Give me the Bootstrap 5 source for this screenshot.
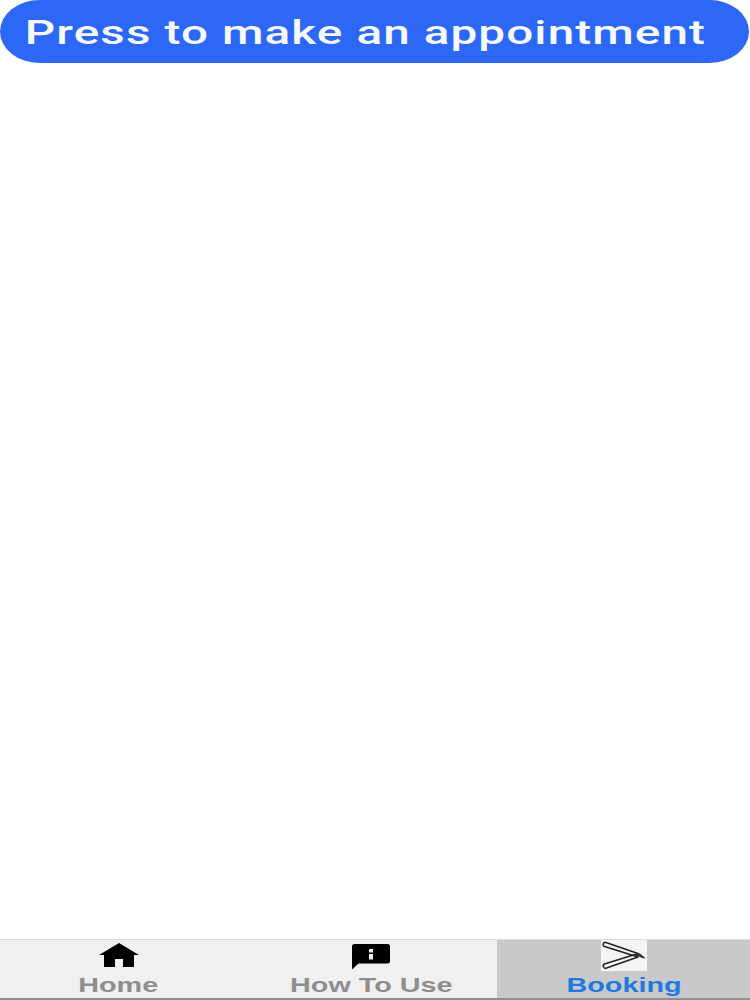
<!DOCTYPE html>
<html lang="en">
<head>
<meta charset="utf-8">
<title>Booking</title>
<link href="https://cdn.jsdelivr.net/npm/bootstrap@5.3.0/dist/css/bootstrap.min.css" rel="stylesheet">
<style>
html, body { height: 1000px; overflow: hidden; }
body { font-family: "Liberation Sans", Arial, sans-serif; background: #fff; }
.press-btn { width: 749px; height: 63px; border: 0; border-radius: 40px / 32px; background: #2c67f6; color: #f6f9ff; font-family: Roboto, "Liberation Sans", sans-serif; font-weight: 500; font-size: 34px; line-height: 1; padding: 0 19px 0 0; }
.press-btn:hover, .press-btn:active { background: #2c67f6; color: #f6f9ff; }
.press-text { display: inline-block; letter-spacing: .8px; transform: scaleX(1.4); white-space: nowrap; }
.tab-strip { height: 61px; background: #f1f0f0; border-top: 1px solid #dcdcdc; border-bottom: 2px solid #8f8f8f; }
.tab-cell { height: 58px; text-decoration: none; color: #8e8e8e; font-weight: 700; font-size: 21px; line-height: 24px; }
.tab-w1 { width: 237px; }
.tab-w2 { width: 252px; }
.tab-w3 { width: 253px; }
.tab-on { background: #c9c8ca; color: #1f7ae0; }
.tab-icon { height: 33px; flex-shrink: 0; }
.tab-label { display: inline-block; transform: scaleX(1.37); }
.razor-box { background: #f4f4f5; width: 46px; height: 31px; display: block; }
</style>
</head>
<body class="d-flex flex-column">
<button type="button" class="btn press-btn flex-shrink-0"><span class="press-text">Press to make an appointment</span></button>
<main class="flex-grow-1"></main>
<nav class="tab-strip d-flex flex-shrink-0">
  <a href="#" class="tab-cell tab-w1 d-flex flex-column align-items-center">
    <svg class="tab-icon" width="42" height="33" viewBox="0 0 42 33" aria-hidden="true"><path fill="#000" d="M21 3 1 15h5V27H17V19h8V27H36V15h5z"/></svg>
    <span class="tab-label">Home</span>
  </a>
  <a href="#" class="tab-cell tab-w2 ms-2 d-flex flex-column align-items-center">
    <svg class="tab-icon" width="42" height="33" viewBox="0 0 42 33" aria-hidden="true"><path fill="#000" d="M4.500 4H37.500a2.500 2.500 0 0 1 2.500 2.500V21a2.500 2.500 0 0 1-2.500 2.500H8.500L2 29.500V6.500A2.500 2.500 0 0 1 4.500 4z"/><rect x="19" y="9" width="4" height="3.500" fill="#f1f0f0"/><rect x="19" y="14" width="4" height="5.500" fill="#f1f0f0"/></svg>
    <span class="tab-label">How To Use</span>
  </a>
  <a href="#" class="tab-cell tab-w3 tab-on d-flex flex-column align-items-center">
    <span class="tab-icon d-block">
      <svg class="razor-box" viewBox="0 0 46 31" aria-hidden="true"><g fill="none" stroke="#222" stroke-width="1.600" stroke-linejoin="round"><path d="M5 2.500 37 13.500l-1.500 3L3.500 6.500a2 2 0 0 1 1.500-4z"/><path d="M3.500 24 35.500 14l1.500 3L5.500 28a2.100 2.100 0 0 1-2-4z"/></g><path d="M35 12.500 39 13.500l6 5-4-.500-6-3z" fill="#333"/></svg>
    </span>
    <span class="tab-label">Booking</span>
  </a>
</nav>
<script src="https://cdn.jsdelivr.net/npm/bootstrap@5.3.0/dist/js/bootstrap.bundle.min.js"></script>
</body>
</html>
